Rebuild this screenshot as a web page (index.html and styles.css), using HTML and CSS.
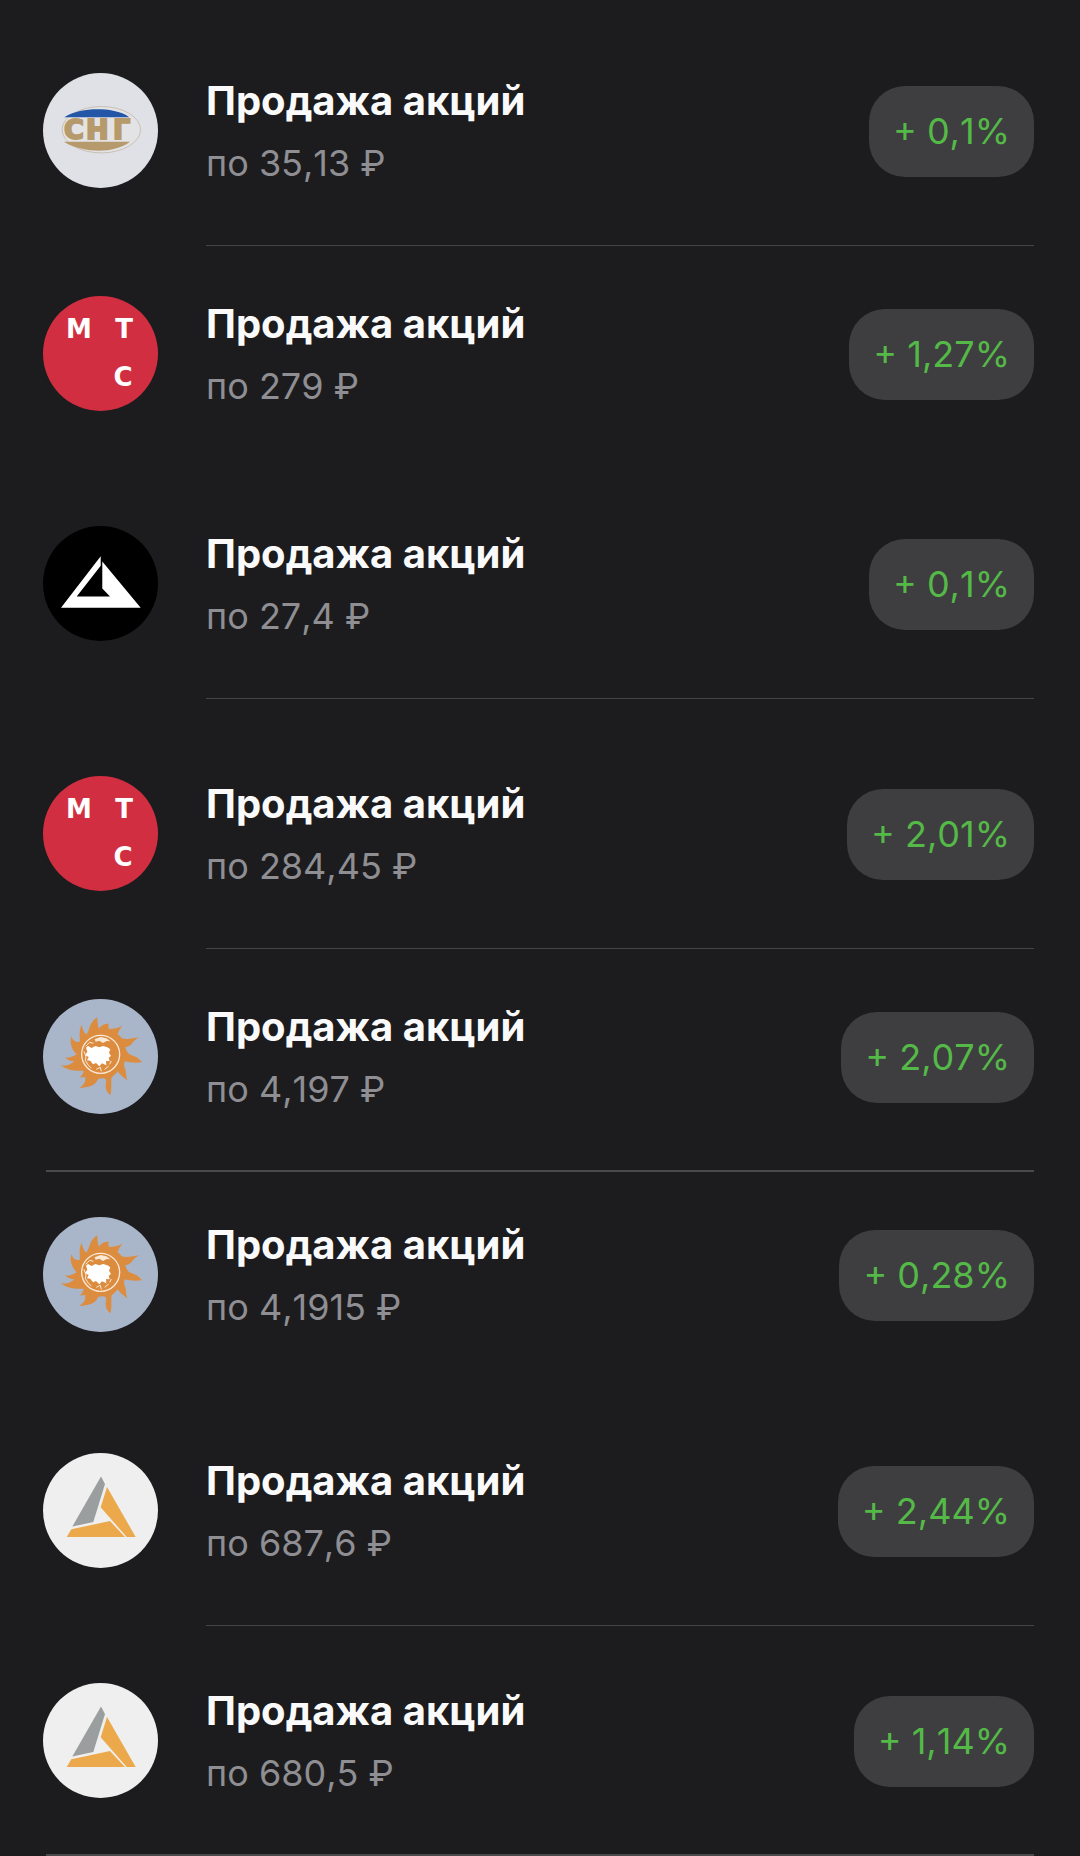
FILE: index.html
```html
<!DOCTYPE html>
<html lang="ru">
<head>
    <meta charset="UTF-8">
    <meta name="viewport" content="width=device-width, initial-scale=1.0">
    <title>Продажа акций</title>
    <link rel="stylesheet" href="styles.css">
</head>
<body>
    <svg class="sprite" aria-hidden="true">
        <symbol id="logo-black" viewBox="0 0 115 115">
            <circle cx="57.5" cy="57.5" r="57.5" fill="#000"/>
            <path d="M57.7 30.3V39.7L33.7 70.4H67L59.3 62.4V35.4L97.7 81.7H18Z" fill="#fff"/>
            <path d="M58.5 31V40" stroke="#000" stroke-width="1"/>
        </symbol>
        <symbol id="logo-sun" viewBox="0 0 115 115">
            <circle cx="57.5" cy="57.5" r="57.5" fill="#a9b6ca"/>
            <g transform="translate(-13 -11) scale(.3333)">
                <path fill="#dc8c3f" d="M202 88C202 102 203 112 207 122C213 112 224 106 237 107C234 113 235 119 237 123C250 122 264 120 278 113C270 121 265 130 263 139C268 142 272 146 275 151C292 156 308 151 328 148C317 154 309 161 303 170C296 175 291 176 286 178C287 185 291 192 297 198C311 205 322 204 336 223C320 225 303 225 284 220C282 228 282 233 284 239C290 250 287 264 292 278C279 266 271 262 263 250C258 258 252 263 245 268C242 282 247 300 241 322C229 310 224 304 229 277C223 267 216 272 205 272C194 296 174 297 148 300C163 290 167 281 166 267C160 268 155 267 149 269C157 261 160 255 161 248C131 250 111 246 92 231C110 235 121 231 133 220C121 219 112 216 105 207C118 211 127 207 140 199C126 184 118 168 124 144C128 158 138 163 149 162C151 145 145 131 155 110C157 121 160 131 169 140C181 125 176 104 202 88Z"/>
                <circle cx="212" cy="199" r="57" fill="none" stroke="#fbe9d8" stroke-width="4"/>
                <path fill="#fff" d="M168 179L174 174L185 180L196 174L208 178L219 174L232 178L241 184L237 194L243 204L236 209L239 220L228 219L229 232L216 226L208 235L198 225L189 229L181 218L171 217L176 207L165 201L172 191Z"/>
                <path fill="#fbe9d8" d="M194 154L212 147L229 151L241 160L230 159L219 165L208 158L197 161Z"/>
                <path fill="none" stroke="#fbe9d8" stroke-width="3" d="M167 175L179 163L190 166M162 190L168 207L166 217L175 232L184 240M199 244L211 238L214 250M224 244L236 234M244 219L239 229"/>
            </g>
        </symbol>
        <symbol id="logo-kit" viewBox="0 0 115 115">
            <circle cx="57.5" cy="57.5" r="57.5" fill="#efefef"/>
            <path d="M58 23.6L62 31L50.3 69L29.3 73.6Z" fill="#9a9e9e"/>
            <path d="M64 34L92.7 84H83.7L57.7 54.3ZM28.3 76.3L67 68L82 84H23.7Z" fill="#eca94c"/>
        </symbol>
    </svg>

    <main class="deals">
        <ul class="group">
            <li class="deal">
                <svg class="logo" viewBox="0 0 115 115">
                    <circle cx="57.5" cy="57.5" r="57.5" fill="#dfe1e7"/>
                    <ellipse cx="58.3" cy="56.7" rx="39.2" ry="23.2" fill="#e3e3e6" stroke="#c9c0b4" stroke-width="1"/>
                    <path d="M21.3 44.3C30 38.5 43 36.3 54 36.3S78 38 86.3 44.3Z" fill="#2456a8"/>
                    <path d="M21 68.7H87C79 75 67 77.7 56 77.7S30 75 21 68.7Z" fill="#b79a6b"/>
                    <g class="sng-text">
                        <text x="21" y="66">С</text>
                        <text x="43" y="66">Н</text>
                        <text x="70" y="66">Г</text>
                    </g>
                </svg>
                <div class="body">
                    <div class="info">
                        <h2>Продажа акций</h2>
                        <p>по 35,13 ₽</p>
                    </div>
                    <span class="profit">+ 0,1%</span>
                </div>
            </li>
            <li class="deal">
                <svg class="logo" viewBox="0 0 115 115">
                    <circle cx="57.5" cy="57.5" r="57.5" fill="#d12f41"/>
                    <g class="mts-text">
                        <text x="36" y="42">М</text>
                        <text x="81" y="42">Т</text>
                        <text x="80" y="90">С</text>
                    </g>
                </svg>
                <div class="body no-line">
                    <div class="info">
                        <h2>Продажа акций</h2>
                        <p>по 279 ₽</p>
                    </div>
                    <span class="profit">+ 1,27%</span>
                </div>
            </li>
        </ul>

        <ul class="group gap-small">
            <li class="deal">
                <svg class="logo" aria-hidden="true"><use href="#logo-black"/></svg>
                <div class="body">
                    <div class="info">
                        <h2>Продажа акций</h2>
                        <p>по 27,4 ₽</p>
                    </div>
                    <span class="profit">+ 0,1%</span>
                </div>
            </li>
        </ul>

        <ul class="group gap-large">
            <li class="deal">
                <svg class="logo" viewBox="0 0 115 115">
                    <circle cx="57.5" cy="57.5" r="57.5" fill="#d12f41"/>
                    <g class="mts-text">
                        <text x="36" y="42">М</text>
                        <text x="81" y="42">Т</text>
                        <text x="80" y="90">С</text>
                    </g>
                </svg>
                <div class="body">
                    <div class="info">
                        <h2>Продажа акций</h2>
                        <p>по 284,45 ₽</p>
                    </div>
                    <span class="profit">+ 2,01%</span>
                </div>
            </li>
            <li class="deal last">
                <svg class="logo" aria-hidden="true"><use href="#logo-sun"/></svg>
                <div class="body no-line">
                    <div class="info">
                        <h2>Продажа акций</h2>
                        <p>по 4,197 ₽</p>
                    </div>
                    <span class="profit">+ 2,07%</span>
                </div>
            </li>
        </ul>

        <ul class="group tight">
            <li class="deal">
                <svg class="logo" aria-hidden="true"><use href="#logo-sun"/></svg>
                <div class="body no-line">
                    <div class="info">
                        <h2>Продажа акций</h2>
                        <p>по 4,1915 ₽</p>
                    </div>
                    <span class="profit">+ 0,28%</span>
                </div>
            </li>
        </ul>

        <ul class="group gap-medium">
            <li class="deal">
                <svg class="logo" aria-hidden="true"><use href="#logo-kit"/></svg>
                <div class="body">
                    <div class="info">
                        <h2>Продажа акций</h2>
                        <p>по 687,6 ₽</p>
                    </div>
                    <span class="profit">+ 2,44%</span>
                </div>
            </li>
        </ul>

        <ul class="group gap-small">
            <li class="deal last">
                <svg class="logo" aria-hidden="true"><use href="#logo-kit"/></svg>
                <div class="body no-line">
                    <div class="info">
                        <h2>Продажа акций</h2>
                        <p>по 680,5 ₽</p>
                    </div>
                    <span class="profit">+ 1,14%</span>
                </div>
            </li>
        </ul>
    </main>
</body>
</html>
```
FILE: styles.css
```css
* {
    box-sizing: border-box;
}
body {
    margin: 0;
    background-color: #1c1c1e;
    color: #fafafa;
    font-family: Inter, "Noto Sans", sans-serif;
}
.sprite {
    display: block;
    width: 0;
    height: 0;
}
.sng-text {
    font: bold 27px "DejaVu Sans", sans-serif;
    fill: #b79a6b;
    stroke: #b79a6b;
    stroke-width: 2px;
}
.mts-text {
    font: bold 26px "DejaVu Sans", sans-serif;
    fill: #fff;
    text-anchor: middle;
}
.deals {
    padding: 23px 46px 0 43px;
}
.group {
    list-style: none;
    margin: 0;
    padding: 0;
}
.gap-small {
    margin-top: 7px;
}
.gap-medium {
    margin-top: 13px;
}
.gap-large {
    margin-top: 27px;
}
.deal {
    display: flex;
    gap: 48px;
}
.logo {
    flex: none;
    width: 115px;
    height: 115px;
    margin-top: 50px;
}
.body {
    flex: 1;
    display: flex;
    justify-content: space-between;
    align-items: flex-start;
    padding: 50px 0 57px;
    border-bottom: 1px solid #454547;
}
.no-line {
    border-color: transparent;
}
/* full-width line under the last deal of the day */
.last {
    background: linear-gradient(#4a4a4c, #4a4a4c) 3px 100% / 100% 2px no-repeat;
}
.tight .logo {
    margin-top: 45px;
}
.tight .body {
    padding-top: 45px;
}
h2 {
    margin: 4px 0 0;
    font-size: 40px;
    line-height: 48px;
    font-weight: 700;
}
p {
    margin: 14px 0 0;
    font-size: 36px;
    line-height: 49px;
    font-kerning: none;
    color: #8e8e93;
}
.profit {
    margin-top: 13px;
    padding: 0 24px;
    border-radius: 36px;
    background-color: #3e3e40;
    color: #55b948;
    font-size: 36px;
    line-height: 91px;
    font-kerning: none;
}
```
